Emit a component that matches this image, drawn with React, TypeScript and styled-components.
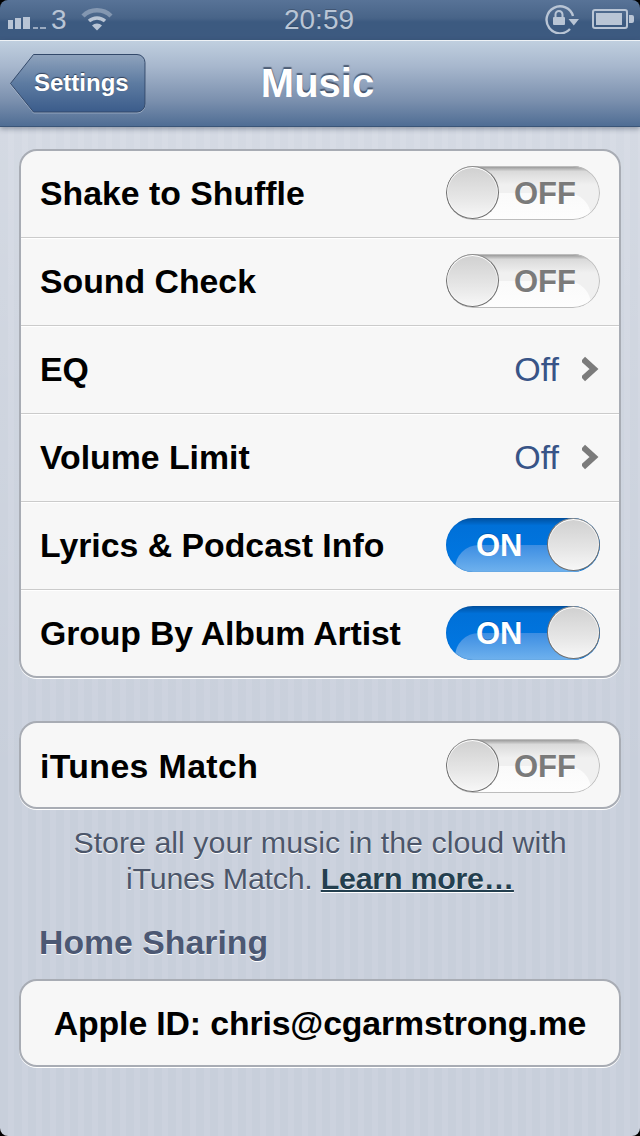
import React from "react"
import styled, {createGlobalStyle} from "styled-components"

const GlobalStyle = createGlobalStyle`
  html, body {
    margin: 0;
    padding: 0;
    background: #000;
  }
  body {
    font-family: "Liberation Sans", Arial, sans-serif;
  }
`

const Screen = styled.div`
  width: 640px;
  height: 1136px;
  overflow: hidden;
  display: flex;
  flex-direction: column;
  background: #000;
`

const StatusBar = styled.div`
  height: 40px;
  flex: none;
  display: grid;
  grid-template-columns: 1fr auto 1fr;
  align-items: center;
  padding: 0 6px 0 8px;
  box-sizing: border-box;
  border-radius: 8px 8px 0 0;
  background: linear-gradient(#587397 0%, #486488 45%, #3c5a80 55%, #3d5a80 100%);
  color: #b9c5d5;
`

const StatusLeft = styled.div`
  display: flex;
  align-items: center;
`

const Carrier = styled.span`
  font-size: 28px;
  line-height: 40px;
  margin-left: 5px;
  margin-right: 14px;
`

const Clock = styled.span`
  font-size: 28px;
  line-height: 40px;
  margin-right: 4px;
  text-shadow: 0 -1px 0 rgba(0, 0, 0, 0.2);
`

const StatusRight = styled.div`
  display: flex;
  justify-content: flex-end;
  align-items: center;
  gap: 12px;
`

const StatusIcon = styled.svg<{$nudge: number}>`
  flex: none;
  margin-top: ${(props) => props.$nudge}px;
`

const NavBar = styled.div`
  height: 87px;
  flex: none;
  display: grid;
  grid-template-columns: 1fr auto 1fr;
  align-items: center;
  padding: 0 10px;
  box-sizing: border-box;
  border-top: 1px solid #eef2f6;
  border-bottom: 1px solid #3a5578;
  background: linear-gradient(#c0cfdf 0%, #a7b7cd 30%, #7b90ae 70%, #4f6d94 100%);
  box-shadow: 0 2px 5px rgba(40, 50, 70, 0.4);
  position: relative;
  z-index: 1;
`

const BackButton = styled.button`
  position: relative;
  justify-self: start;
  width: 136px;
  height: 60px;
  margin-top: 1px;
  padding: 0 0 2px 24px;
  background: none;
  border: 0;
  color: #fff;
  font: bold 24px "Liberation Sans", Arial, sans-serif;
  text-align: left;
  text-shadow: 0 -1px 1px rgba(30, 40, 60, 0.7);
`

const BackShape = styled.svg`
  position: absolute;
  left: 0;
  top: 0;
  filter: drop-shadow(0 1px 0 rgba(255, 255, 255, 0.3));
`

const BackLabel = styled.span`
  position: relative;
`

const Title = styled.h1`
  margin: 0 5px 0 0;
  font-size: 40px;
  font-weight: bold;
  color: #fff;
  text-shadow: 0 -2px 1px rgba(40, 55, 80, 0.7);
`

const Content = styled.div`
  flex: 1;
  padding: 22px 19px 0;
  display: flex;
  flex-direction: column;
  border-radius: 0 0 8px 8px;
  background:
    linear-gradient(rgba(255, 255, 255, 0.22), rgba(255, 255, 255, 0) 65%),
    repeating-linear-gradient(
      90deg,
      #c8cfdb 0,
      #c8cfdb 8px,
      #ccd2de 8px,
      #ccd2de 14px
    );
`

const Group = styled.div<{$gap?: number}>`
  flex: none;
  background: #f7f7f7;
  border: 2px solid #a8acb4;
  border-radius: 18px;
  box-shadow: 0 1px 0 #fff;
  margin-bottom: ${(props) => props.$gap ?? 0}px;
  overflow: hidden;
`

const Row = styled.div`
  height: 88px;
  box-sizing: border-box;
  display: flex;
  align-items: flex-start;
  justify-content: space-between;
  padding: 16px 19px 0;
  border-top: 1px solid #cbcbcb;
  box-shadow: inset 0 1px 0 #fff;
  &:first-child {
    height: 86px;
    padding-top: 15px;
    border-top: 0;
    box-shadow: none;
  }
  &:last-child {
    height: 87px;
  }
  &:only-child {
    height: 84px;
    padding-top: 16px;
  }
`

const Label = styled.span<{$track?: number}>`
  font-size: 33.8px;
  line-height: 54px;
  font-weight: bold;
  letter-spacing: ${(props) => props.$track ?? 0}px;
  color: #000;
`

const CenterLabel = styled(Label)`
  flex: 1;
  margin-top: -1px;
  text-align: center;
`

const Detail = styled.div`
  display: flex;
  align-items: center;
  gap: 23px;
  height: 54px;
`

const Value = styled.span`
  font-size: 34px;
  color: #385487;
`

const ToggleTrack = styled.div<{$on: boolean}>`
  position: relative;
  width: 154px;
  height: 54px;
  border-radius: 27px;
  overflow: hidden;
  flex: none;
  background: ${(props) =>
    props.$on
      ? "linear-gradient(#00509f 0%, #0070d8 14%, #0179e4 100%)"
      : "linear-gradient(#8d8d8d 0%, #dadada 10%, #f0f0f0 35%, #f0f0f0 100%)"};
  &::after {
    content: "";
    position: absolute;
    inset: 0;
    border-radius: inherit;
    box-shadow: ${(props) =>
      props.$on ? "inset 0 0 1px rgba(0, 50, 110, 0.5)" : "inset 0 0 0 1px #bdbdbd"};
  }
`

const ToggleGloss = styled.div<{$on: boolean}>`
  position: absolute;
  top: 27px;
  height: 40px;
  border-radius: 24px 24px 0 0;
  ${(props) =>
    props.$on
      ? "left: 9px; right: 20px; background: linear-gradient(#3c8de2, #71b3ee 70%);"
      : "left: 20px; right: 9px; background: linear-gradient(#fafafa, #fff);"}
`

const ToggleText = styled.span<{$on: boolean}>`
  position: absolute;
  top: 1px;
  line-height: 54px;
  font-size: 31px;
  font-weight: bold;
  ${(props) =>
    props.$on
      ? "left: 30px; color: #fff; text-shadow: 0 -1px 0 rgba(0, 50, 120, 0.4);"
      : "right: 24px; color: #7a7a7a; text-shadow: 0 1px 0 #fff;"}
`

const ToggleKnob = styled.div<{$on: boolean}>`
  position: absolute;
  z-index: 1;
  top: 0;
  ${(props) => (props.$on ? "right: 0;" : "left: 0;")}
  width: 53px;
  height: 53px;
  border-radius: 50%;
  box-sizing: border-box;
  border: 1px solid #707070;
  border-top-color: #8e8e8e;
  background: linear-gradient(#d0d0d0 0%, #e6e6e6 60%, #f7f7f7 100%);
  box-shadow: inset 0 1px 0 #fff, inset 0 0 0 1px rgba(255, 255, 255, 0.6);
`

const Footer = styled.p`
  margin: 15px 0 27px;
  font-size: 30.4px;
  line-height: 36px;
  text-align: center;
  color: #4c566a;
  text-shadow: 0 1px 0 #fff;
`

const FooterLine = styled.span`
  letter-spacing: -0.25px;
`

const FooterLink = styled.a`
  font-weight: bold;
  color: #243f4f;
  text-decoration: underline;
  text-decoration-thickness: 2px;
`

const SectionTitle = styled.h2`
  margin: 0 0 18px 20px;
  font-size: 33.8px;
  line-height: 38px;
  font-weight: bold;
  color: #4c5873;
  text-shadow: 0 1px 0 #fff;
`

const SignalIcon = () => (
  <StatusIcon $nudge={6} width="38" height="12" viewBox="0 0 38 12" fill="currentColor">
    <rect x="0" y="3" width="5" height="9" />
    <rect x="7" y="1" width="6" height="11" />
    <rect x="15" y="0" width="7" height="12" />
    <rect x="25" y="10" width="5" height="2" opacity="0.75" />
    <rect x="32" y="10" width="6" height="2" opacity="0.75" />
  </StatusIcon>
)

const WifiIcon = () => (
  <StatusIcon $nudge={-2} width="32" height="24" viewBox="0 0 32 24" fill="none" stroke="currentColor">
    <path d="M2 9 A20 20 0 0 1 30 9" strokeWidth="4.5" opacity="0.5" />
    <path d="M8 14 A12 12 0 0 1 24 14" strokeWidth="3.5" />
    <path d="M16 23.5 L11 18.5 A7 7 0 0 1 21 18.5 Z" fill="currentColor" stroke="none" />
  </StatusIcon>
)

const RotationLockIcon = () => (
  <StatusIcon $nudge={-3} width="35" height="31" viewBox="0 0 35 31">
    <path
      d="M25 26 A13.5 13.5 0 1 1 28 13"
      fill="none"
      stroke="currentColor"
      strokeWidth="2.4"
    />
    <path d="M23.5 16 H34 L28.8 22.5 Z" fill="currentColor" />
    <rect x="8" y="14" width="12" height="8" rx="1" fill="currentColor" />
    <path
      d="M10.5 14 V11.5 a3.5 3.5 0 0 1 7 0 V14"
      fill="none"
      stroke="currentColor"
      strokeWidth="2"
    />
  </StatusIcon>
)

const BatteryIcon = () => (
  <StatusIcon $nudge={-2} width="42" height="20" viewBox="0 0 42 20">
    <rect x="1" y="1" width="34" height="18" rx="2" fill="none" stroke="currentColor" strokeWidth="2" />
    <rect x="4" y="4" width="26" height="12" fill="currentColor" />
    <path d="M37 6 H40 a2 2 0 0 1 2 2 V12 a2 2 0 0 1 -2 2 H37 Z" fill="currentColor" />
  </StatusIcon>
)

const Chevron = () => (
  <svg width="18" height="26" viewBox="0 0 18 26">
    <path d="M1 3 L12 13 L1 23" fill="none" stroke="#7b7b7b" strokeWidth="6" />
  </svg>
)

const Toggle: React.FC<{on?: boolean}> = ({on = false}) => (
  <ToggleTrack $on={on}>
    <ToggleGloss $on={on} />
    <ToggleText $on={on}>{on ? "ON" : "OFF"}</ToggleText>
    <ToggleKnob $on={on} />
  </ToggleTrack>
)

const App: React.FC = () => {
  return (
    <Screen>
      <GlobalStyle />
      <StatusBar>
        <StatusLeft>
          <SignalIcon />
          <Carrier>3</Carrier>
          <WifiIcon />
        </StatusLeft>
        <Clock>20:59</Clock>
        <StatusRight>
          <RotationLockIcon />
          <BatteryIcon />
        </StatusRight>
      </StatusBar>
      <NavBar>
        <BackButton>
          <BackShape width="136" height="60" viewBox="0 0 136 60">
            <defs>
              <linearGradient id="backFill" x1="0" y1="0" x2="0" y2="1">
                <stop offset="0" stopColor="#8fa3bd" />
                <stop offset="0.5" stopColor="#5d7ba1" />
                <stop offset="1" stopColor="#3b5c8b" />
              </linearGradient>
            </defs>
            <path
              d="M23.5 .5 H127 a8 8 0 0 1 8 8 V50 a8 8 0 0 1 -8 8 H23.5 L.5 29.5 Z"
              fill="url(#backFill)"
              stroke="#33496a"
              strokeWidth="1"
            />
          </BackShape>
          <BackLabel>Settings</BackLabel>
        </BackButton>
        <Title>Music</Title>
      </NavBar>
      <Content>
        <Group $gap={43}>
          <Row>
            <Label>Shake to Shuffle</Label>
            <Toggle />
          </Row>
          <Row>
            <Label>Sound Check</Label>
            <Toggle />
          </Row>
          <Row>
            <Label>EQ</Label>
            <Detail>
              <Value>Off</Value>
              <Chevron />
            </Detail>
          </Row>
          <Row>
            <Label>Volume Limit</Label>
            <Detail>
              <Value>Off</Value>
              <Chevron />
            </Detail>
          </Row>
          <Row>
            <Label>Lyrics &amp; Podcast Info</Label>
            <Toggle on />
          </Row>
          <Row>
            <Label $track={-0.14}>Group By Album Artist</Label>
            <Toggle on />
          </Row>
        </Group>
        <Group>
          <Row>
            <Label $track={0.4}>iTunes Match</Label>
            <Toggle />
          </Row>
        </Group>
        <Footer>
          Store all your music in the cloud with
          <br />
          <FooterLine>
            iTunes Match. <FooterLink>Learn more…</FooterLink>
          </FooterLine>
        </Footer>
        <SectionTitle>Home Sharing</SectionTitle>
        <Group>
          <Row>
            <CenterLabel $track={-0.13}>Apple ID: chris@cgarmstrong.me</CenterLabel>
          </Row>
        </Group>
      </Content>
    </Screen>
  )
}

export default App
